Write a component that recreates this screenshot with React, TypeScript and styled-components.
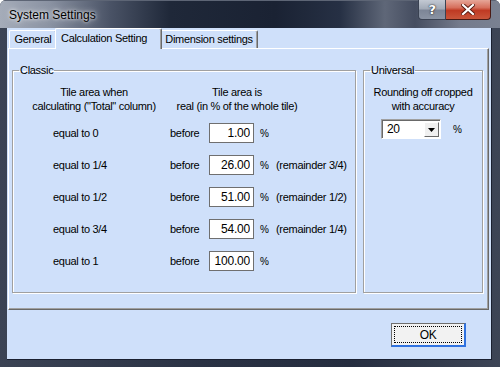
import React from "react";
import styled, { createGlobalStyle } from "styled-components";

const GlobalStyle = createGlobalStyle`
  html, body {
    margin: 0;
    padding: 0;
    background: #ffffff;
  }
  * {
    box-sizing: border-box;
  }
`;

const rows = [
  { label: "equal to 0", value: "1.00", remark: "" },
  { label: "equal to 1/4", value: "26.00", remark: "(remainder 3/4)" },
  { label: "equal to 1/2", value: "51.00", remark: "(remainder 1/2)" },
  { label: "equal to 3/4", value: "54.00", remark: "(remainder 1/4)" },
  { label: "equal to 1", value: "100.00", remark: "" },
];

const App: React.FC = () => {
  return (
    <>
      <GlobalStyle />
      <Window>
        <TitleBar>
          <Title>System Settings</Title>
          <Caption>
            <HelpButton>?</HelpButton>
            <CloseButton>
              <svg width="14" height="11" viewBox="0 0 14 11">
                <path
                  d="M2 1 L12 10 M12 1 L2 10"
                  stroke="#5a1a10"
                  strokeWidth="4"
                  strokeLinecap="square"
                />
                <path
                  d="M2 1 L12 10 M12 1 L2 10"
                  stroke="#ffffff"
                  strokeWidth="2.2"
                  strokeLinecap="square"
                />
              </svg>
            </CloseButton>
          </Caption>
        </TitleBar>
        <Frame>
          <Client>
            <TabStrip>
              <Tab $width={48}>General</Tab>
              <Tab $width={107} $active>
                Calculation Setting
              </Tab>
              <Tab $width={98}>Dimension settings</Tab>
            </TabStrip>
            <TabPanel>
              <Group $width={344}>
                <Legend>Classic</Legend>
                <HeaderRow>
                  <HeaderCell $width={162}>
                    Tile area when
                    <br />
                    calculating ("Total" column)
                  </HeaderCell>
                  <HeaderCell $width={124}>
                    Tile area is
                    <br />
                    real (in % of the whole tile)
                  </HeaderCell>
                </HeaderRow>
                <Rows>
                  {rows.map((r) => (
                    <Row key={r.label}>
                      <RowLabel>{r.label}</RowLabel>
                      <Before>before</Before>
                      <NumberBox readOnly value={r.value} />
                      <Percent>%</Percent>
                      <Remark>{r.remark}</Remark>
                    </Row>
                  ))}
                </Rows>
              </Group>
              <Group $width={120}>
                <Legend>Universal</Legend>
                <HeaderRow>
                  <HeaderCell $width={118}>
                    Rounding off cropped
                    <br />
                    with accuracy
                  </HeaderCell>
                </HeaderRow>
                <SelectRow>
                  <SelectBox>
                    <SelectValue>20</SelectValue>
                    <DropButton>
                      <svg width="7" height="4" viewBox="0 0 7 4">
                        <path d="M0 0 H7 L3.5 4 Z" fill="#000" />
                      </svg>
                    </DropButton>
                  </SelectBox>
                  <Percent>%</Percent>
                </SelectRow>
              </Group>
            </TabPanel>
            <Footer>
              <OkButton>
                <FocusRect>OK</FocusRect>
              </OkButton>
            </Footer>
          </Client>
        </Frame>
      </Window>
    </>
  );
};

export default App;

const Window = styled.div`
  width: 500px;
  height: 367px;
  display: flex;
  flex-direction: column;
  border-radius: 6px 6px 0 0;
  overflow: hidden;
  background: linear-gradient(
    90deg,
    #3b4354 0%,
    #2a3244 40%,
    #252d3f 70%,
    #3d4556 100%
  );
  font-family: "Liberation Sans", Arial, sans-serif;
  font-size: 11px;
  letter-spacing: -0.3px;
  color: #000;
`;

const TitleBar = styled.div`
  height: 28px;
  flex-shrink: 0;
  display: flex;
  align-items: flex-start;
  justify-content: space-between;
  padding: 0 9px 0 9px;
  border-top: 1px solid #5d6575;
  background: linear-gradient(
    90deg,
    #a5acb9 0%,
    #8a92a2 10%,
    #4a5366 22%,
    #1f2839 34%,
    #1a2233 55%,
    #263044 68%,
    #5f6778 77%,
    #454d60 83%,
    #747b8c 92%,
    #7a8191 100%
  );
`;

const Title = styled.div`
  font-size: 12px;
  line-height: 14px;
  letter-spacing: 0;
  padding-top: 7px;
  color: #000;
  text-shadow: 0 0 6px rgba(255, 255, 255, 0.9), 0 0 3px rgba(255, 255, 255, 0.8);
`;

const Caption = styled.div`
  display: flex;
  margin-top: -1px;
`;

const HelpButton = styled.div`
  width: 28px;
  height: 20px;
  display: flex;
  align-items: center;
  justify-content: center;
  border: 1px solid #3a4252;
  border-top: none;
  border-radius: 0 0 0 4px;
  background: linear-gradient(180deg, #c3c9d3 0%, #a3abb8 45%, #7d8697 55%, #8a93a3 100%);
  color: #fff;
  font-family: "DejaVu Sans", sans-serif;
  font-weight: bold;
  font-size: 13px;
  text-shadow: 0 0 2px #222, 0 0 1px #222;
`;

const CloseButton = styled.div`
  width: 45px;
  height: 20px;
  display: flex;
  align-items: center;
  justify-content: center;
  border: 1px solid #4a1a14;
  border-left: none;
  border-top: none;
  border-radius: 0 0 4px 0;
  background: linear-gradient(180deg, #e6a698 0%, #d66f5c 40%, #bf3a23 55%, #c9553a 100%);
`;

const Frame = styled.div`
  flex: 1;
  display: flex;
  padding: 0 8px 7px 7px;
`;

const Client = styled.div`
  flex: 1;
  display: flex;
  flex-direction: column;
  background: #cfe0fa;
  border-right: 1px solid #1a2030;
  border-bottom: 1px solid #1a2030;
`;

const TabStrip = styled.div`
  height: 20px;
  display: flex;
  align-items: flex-end;
  padding-left: 2px;
`;

const Tab = styled.div<{ $active?: boolean; $width: number }>`
  position: relative;
  z-index: ${(p) => (p.$active ? 1 : 0)};
  width: ${(p) => p.$width}px;
  height: ${(p) => (p.$active ? "21px" : "18px")};
  margin: ${(p) => (p.$active ? "0 -2px -1px -2px" : "0")};
  padding: ${(p) => (p.$active ? "3px 0 0 5px" : "2px 0 0 0")};
  text-align: ${(p) => (p.$active ? "left" : "center")};
  line-height: 13px;
  font-size: 11px;
  white-space: nowrap;
  background: #cfe0fa;
  border-top: 1px solid #ffffff;
  border-left: 1px solid #ffffff;
  border-right: 1px solid #6a6a6a;
  border-radius: 2px 2px 0 0;
  box-shadow: inset -1px 0 0 #a0a0a0;
`;

const TabPanel = styled.div`
  height: 262px;
  margin: 0 2px 0 1px;
  display: flex;
  gap: 7px;
  padding: 15px 5px 16px 3px;
  border-top: 1px solid #ffffff;
  border-left: 1px solid #ffffff;
  border-right: 1px solid #696969;
  border-bottom: 1px solid #696969;
  box-shadow: inset -1px -1px 0 #a0a0a0;
`;

const Group = styled.fieldset<{ $width: number }>`
  width: ${(p) => p.$width}px;
  margin: 0;
  padding: 0;
  min-width: 0;
  border: 1px solid #a0a0a0;
  box-shadow: 1px 1px 0 #ffffff, inset 1px 1px 0 #ffffff;
`;

const Legend = styled.legend`
  margin-left: 6px;
  padding: 0 1px;
  font-size: 11px;
  line-height: 13px;
`;

const HeaderRow = styled.div`
  display: flex;
  padding-top: 8px;
`;

const HeaderCell = styled.div<{ $width: number }>`
  width: ${(p) => p.$width}px;
  text-align: center;
  line-height: 14px;
  white-space: nowrap;
`;

const Rows = styled.div`
  display: flex;
  flex-direction: column;
  gap: 12px;
  padding: 10px 0 0 40px;
`;

const Row = styled.div`
  height: 20px;
  display: flex;
  align-items: center;
`;

const RowLabel = styled.div`
  width: 117px;
`;

const Before = styled.div`
  width: 39px;
`;

const NumberBox = styled.input`
  width: 45px;
  height: 20px;
  padding: 0 3px 1px 0;
  border: 1px solid #6f6f6f;
  background: #ffffff;
  text-align: right;
  font-family: "Liberation Sans", Arial, sans-serif;
  font-size: 12px;
  letter-spacing: -0.2px;
  color: #000;
  outline: none;
`;

const Percent = styled.div`
  width: 16px;
  margin-left: 6px;
  font-size: 10px;
`;

const Remark = styled.div`
  white-space: nowrap;
`;

const SelectRow = styled.div`
  display: flex;
  align-items: center;
  gap: 6px;
  padding: 6px 0 0 17px;
`;

const SelectBox = styled.div`
  width: 60px;
  height: 20px;
  display: flex;
  align-items: stretch;
  background: #ffffff;
  border: 1px solid;
  border-color: #a0a0a0 #ffffff #ffffff #a0a0a0;
  box-shadow: inset 1px 1px 0 #696969;
  padding: 2px 1px 1px 2px;
`;

const SelectValue = styled.div`
  flex: 1;
  padding-left: 3px;
  font-size: 12px;
  line-height: 15px;
`;

const DropButton = styled.div`
  width: 15px;
  display: flex;
  align-items: center;
  justify-content: center;
  background: #f0f0f0;
  border: 1px solid;
  border-color: #ffffff #696969 #696969 #ffffff;
`;

const Footer = styled.div`
  flex: 1;
  display: flex;
  justify-content: flex-end;
  align-items: flex-start;
  padding: 13px 25px 0 0;
`;

const OkButton = styled.div`
  width: 75px;
  height: 24px;
  padding: 2px;
  background: #f2f2f2;
  border-top: 1px solid #6e6e6e;
  border-left: 1px solid #6e6e6e;
  border-right: 2px solid #2f72e0;
  border-bottom: 2px solid #2f72e0;
`;

const FocusRect = styled.div`
  height: 100%;
  display: flex;
  align-items: center;
  justify-content: center;
  border: 1px dotted #000;
  font-size: 12px;
`;
